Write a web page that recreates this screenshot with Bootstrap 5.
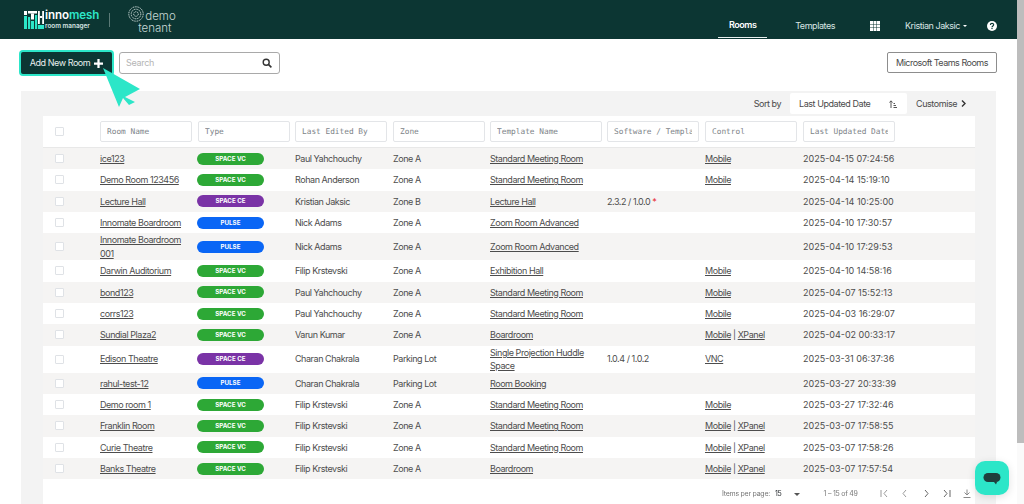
<!DOCTYPE html>
<html lang="en">

<head>
    <meta charset="UTF-8">
    <meta name="viewport" content="width=device-width, initial-scale=1.0">
    <title>Rooms - innomesh</title>
    <link href="https://cdn.jsdelivr.net/npm/bootstrap@5.3.3/dist/css/bootstrap.min.css" rel="stylesheet">
    <style>
        html, body { height: 504px; overflow: hidden; }
        body { font-family: "Inter", "Liberation Sans", sans-serif; font-size: 9px; letter-spacing: -.45px; color: #4a4a4a; background: #fff; }
        .page-wrap { height: 504px; width: 1017px; overflow: hidden; position: relative; }
        .scroll-track { position: fixed; top: 0; right: 0; width: 7px; height: 504px; background: #fafafa; }
        .scroll-thumb { width: 7px; height: 443px; background: #bdbdbd; }

        .top-bar { height: 39px; background: #0c3633; padding: 0 20px 0 24px; color: #fff; }
        .logo-mark { margin-right: 1px; }
        .logo-text { line-height: 1; color: #fff; letter-spacing: 0; }
        .logo-name { font-size: 11.6px; font-weight: 600; letter-spacing: -.1px; }
        .logo-name span { color: #2ce6c8; }
        .logo-sub { font-size: 6.4px; font-weight: 600; margin-top: 1px; color: #d5e3e1; }
        .logo-sep { width: 1px; height: 14px; background: #5b7a77; margin: 0 17px 0 10px; }
        .tenant-text { font-size: 11.5px; line-height: 12px; letter-spacing: 0; color: #c6d6d4; font-weight: 300; }
        .tenant-line { margin-left: 11px; }
        .top-right { height: 39px; }
        .top-link { font-size: 9px; color: #d9e5e3; height: 39px; padding-top: 13px; display: flex; align-items: center; text-decoration: none; }
        .top-link.on { color: #fff; font-weight: 600; width: 49px; justify-content: center; border-bottom: 1px solid #e8f0ef; height: 38px; margin-bottom: 1px; margin-right: 28px; }
        .top-icon { margin-top: 13px; flex-shrink: 0; }
        .caret-tiny { width: 0; height: 0; border-left: 2px solid transparent; border-right: 2px solid transparent; border-top: 2px solid #fff; margin-left: 3px; }

        .tool-row { padding: 13px 20px 0 21px; height: 52px; }
        .add-btn { width: 91px; height: 22px; background: #0c3633; color: #e8efee; border: 0; border-radius: 2px; font-size: 9px; letter-spacing: -.45px; box-shadow: 0 0 0 2px #2ce6c8; padding: 0; margin-right: 7px; }
        .add-btn:hover { background: #0c3633; color: #e8efee; }
        .search-box { width: 161px; height: 22px; border: 1px solid #a9a9a9; border-radius: 3px; padding: 0 7px 0 6px; }
        .search-box input { border: 0; outline: 0; width: 130px; font-size: 9px; letter-spacing: -.3px; padding: 0; background: transparent; }
        .search-box input::placeholder { color: #b5b5b5; }
        .teams-btn { height: 21px; width: 110px; border: 1px solid #8d8d8d; border-radius: 2px; font-size: 9px; letter-spacing: -.5px; background: #fff; color: #4a4a4a; padding: 0; }

        .grey-panel { background: #f3f3f3; margin: 0 0 0 21px; width: 975px; height: 420px; padding: 0 21px 0 22px; }
        .sort-row { height: 25px; padding-right: 9px; }
        .sort-select { width: 117px; height: 21px; background: #fff; border-radius: 2px; padding: 0 10px 0 9px; margin: 0 9px 0 9px; }

        .white-box { background: #fff; width: 932px; height: 395px; }
        .rooms-table { table-layout: fixed; width: 932px; margin: 0; border-collapse: separate; border-spacing: 0; }
        .rooms-table th { height: 32px; padding: 0 5px 0 0; font-weight: 400; border-bottom: 1px solid #e8e8e8; vertical-align: middle; }
        .rooms-table td { height: 21.33px; padding: 0 5px 0 0; vertical-align: middle; line-height: 13.5px; color: #4d4d4d; }
        .rooms-table tbody tr:nth-child(odd) td { background: #f5f4f3; }
        .rooms-table a { color: #4d4d4d; }
        .rooms-table .tick-col { padding-left: 12px; }
        .rooms-table .date-col { letter-spacing: 0; }
        .filter-box { width: 92px; height: 21px; border: 1px solid #e3e5e8; border-radius: 2px; padding: 0 6px; font-family: "DejaVu Sans Mono", monospace; font-size: 7.8px; letter-spacing: 0; background: #fff; outline: 0; display: block; }
        .filter-box::placeholder { color: #7d8388; }
        .filter-wide { width: 112px; }
        .tick-box { display: block; width: 9px; height: 9px; border: 1px solid #dfe2e6; border-radius: 1px; background: #fff; }
        .type-pill { display: block; width: 67px; height: 12px; line-height: 12px; margin-left: -1px; border-radius: 6px; color: #fff; text-align: center; font-size: 6.2px; font-weight: 700; letter-spacing: 0; }
        .pill-vc { background: #2da836; }
        .pill-ce { background: #7a33a6; }
        .pill-pulse { background: #0a66f5; }
        .star-red { color: #e8262c; }

        .pager-row { position: fixed; left: 722px; top: 488px; height: 12px; font-size: 7px; letter-spacing: -.25px; color: #777; white-space: nowrap; }
        .cursor-mark { position: absolute; left: 103px; top: 68px; }
        .chat-fab { position: fixed; left: 975px; top: 461px; width: 34px; height: 34px; border-radius: 10px; background: #2ce6c8; box-shadow: 0 2px 8px rgba(0, 0, 0, .12); }
    </style>
</head>

<body>
    <div class="page-wrap">
        <nav class="top-bar d-flex align-items-center">
            <svg width="20" height="18" viewBox="0 0 20 18" class="logo-mark flex-shrink-0">
                <rect x="0" y="0" width="3" height="4" fill="#fff" />
                <rect x="0" y="5" width="3" height="13" fill="#2ce6c8" />
                <rect x="4" y="0" width="9" height="2.5" fill="#fff" />
                <rect x="7" y="2.5" width="3" height="6" fill="#fff" />
                <rect x="4" y="6" width="2.2" height="12" fill="#2ce6c8" />
                <rect x="7" y="10" width="3" height="8" fill="#2ce6c8" />
                <rect x="11" y="4" width="2.2" height="14" fill="#2ce6c8" />
                <rect x="14" y="0" width="1.8" height="13" fill="#fff" />
                <rect x="15.8" y="5" width="2.4" height="2" fill="#fff" />
                <rect x="18.2" y="0" width="1.8" height="13" fill="#fff" />
                <rect x="14" y="14" width="6" height="4" fill="#2ce6c8" />
            </svg>
            <div class="logo-text">
                <div class="logo-name">inno<span>mesh</span></div>
                <div class="logo-sub">room manager</div>
            </div>
            <div class="logo-sep"></div>
            <div class="tenant-text">
                <div class="d-flex align-items-end">
                    <svg width="18" height="16" viewBox="-9 -8 18 16" class="flex-shrink-0">
                        <g fill="none" stroke="#d7e3e1" stroke-width="1" stroke-dasharray="1.1 .7">
                            <circle r="7.2" />
                            <circle r="4.8" />
                            <circle r="2.3" />
                        </g>
                    </svg>
                    <span>demo</span>
                </div>
                <div class="tenant-line">tenant</div>
            </div>
            <div class="top-right ms-auto d-flex align-items-center">
                <a href="#" class="top-link on">Rooms</a>
                <a href="#" class="top-link" style="margin-right:35px">Templates</a>
                <svg width="10" height="10" viewBox="0 0 10 10" class="top-icon" style="margin-right:25px">
                    <path fill="#fff" d="M0 0h3v3H0zM3.5 0h3v3h-3zM7 0h3v3H7zM0 3.5h3v3H0zM3.5 3.5h3v3h-3zM7 3.5h3v3H7zM0 7h3v3H0zM3.5 7h3v3h-3zM7 7h3v3H7z" />
                </svg>
                <a href="#" class="top-link">Kristian Jaksic<span class="caret-tiny"></span></a>
                <svg width="10" height="10" viewBox="0 0 10 10" class="top-icon" style="margin-left:20px">
                    <circle cx="5" cy="5" r="5" fill="#fff" />
                    <path d="M3.4 3.9c0-2 3.3-2 3.3-.1 0 1.2-1.7 1.2-1.7 2.5" fill="none" stroke="#0c3633" stroke-width="1.1" />
                    <rect x="4.4" y="6.9" width="1.2" height="1.2" fill="#0c3633" />
                </svg>
            </div>
        </nav>

        <div class="tool-row d-flex align-items-start">
            <button class="btn add-btn d-flex align-items-center justify-content-center gap-1">Add New Room
                <svg width="9" height="9" viewBox="0 0 8 8"><path d="M3 0h2v3h3v2H5v3H3V5H0V3h3z" fill="#fff" /></svg>
            </button>
            <div class="search-box d-flex align-items-center justify-content-between">
                <input type="text" placeholder="Search">
                <svg width="10" height="10" viewBox="0 0 10 10"><circle cx="4.2" cy="4.2" r="3" fill="none" stroke="#333" stroke-width="1.4" /><path d="M6.4 6.4l3 3" stroke="#333" stroke-width="1.6" /></svg>
            </div>
            <button class="teams-btn ms-auto">Microsoft Teams Rooms</button>
        </div>

        <svg class="cursor-mark" width="38" height="40" viewBox="0 0 38 40">
            <path d="M0 0L37 21 22 29 32 34 26 37 20 30 16 39z" fill="#2ce6c8" />
        </svg>

        <div class="grey-panel">
            <div class="sort-row d-flex align-items-center justify-content-end">
                <span>Sort by</span>
                <div class="sort-select d-flex align-items-center justify-content-between">
                    <span>Last Updated Date</span>
                    <svg width="8" height="8" viewBox="0 0 8 8"><path d="M2 8V1M.5 2.5L2 .8l1.5 1.7" fill="none" stroke="#555" /><path d="M4.5 3.5h1.5M4.5 5.5h2.5M4.5 7.5h3.5" stroke="#555" /></svg>
                </div>
                <span class="d-flex align-items-center gap-1">Customise
                    <svg width="5" height="7" viewBox="0 0 5 7"><path d="M1 .5l3 3-3 3" fill="none" stroke="#333" stroke-width="1.4" /></svg>
                </span>
            </div>
            <div class="white-box">
                <table class="rooms-table">
                    <colgroup>
                        <col style="width:57px"><col style="width:98px"><col style="width:97px"><col style="width:98px"><col style="width:97px"><col style="width:117px"><col style="width:98px"><col style="width:98px"><col>
                    </colgroup>
                    <thead>
                        <tr>
                            <th class="tick-col"><span class="tick-box"></span></th>
                            <th><input class="filter-box" placeholder="Room Name"></th>
                            <th><input class="filter-box" placeholder="Type"></th>
                            <th><input class="filter-box" placeholder="Last Edited By"></th>
                            <th><input class="filter-box" placeholder="Zone"></th>
                            <th><input class="filter-box filter-wide" placeholder="Template Name"></th>
                            <th><input class="filter-box" placeholder="Software / Template"></th>
                            <th><input class="filter-box" placeholder="Control"></th>
                            <th><input class="filter-box" placeholder="Last Updated Date"></th>
                        </tr>
                    </thead>
                    <tbody id="room-rows"></tbody>
                </table>
            </div>
        </div>
    </div>

    <div class="pager-row d-flex align-items-center">
        <span>Items per page:</span>
        <span class="text-dark" style="margin-left:5px">15</span>
        <span class="caret-tiny" style="border-top-color:#555;border-left-width:3px;border-right-width:3px;border-top-width:3px;margin-left:12px"></span>
        <span style="margin-left:24px">1 – 15 of 49</span>
        <svg width="94" height="10" viewBox="0 0 94 10" style="margin-left:22px">
            <g fill="none" stroke="#9a9a9a" stroke-width="1">
                <path d="M1 1v7M7 1L4 4.5 7 8" />
                <path d="M26 1l-3 3.5L26 8" />
            </g>
            <g fill="none" stroke="#666" stroke-width="1">
                <path d="M45 1l3 3.5L45 8" />
                <path d="M64 1l3 3.5L64 8M70 1v7" />
            </g>
            <path d="M87 .5v5M84.5 3.5L87 6l2.5-2.5M83.5 8.5h7" fill="none" stroke="#8a8a8a" />
        </svg>
    </div>

    <div class="chat-fab d-flex align-items-center justify-content-center">
        <svg width="18" height="14" viewBox="0 0 18 14"><rect x="0.5" y="2" width="17" height="9" rx="4.5" fill="#1f3f3c" /><path d="M11 11h3l-1 2.5z" fill="#1f3f3c" /></svg>
    </div>

    <div class="scroll-track"><div class="scroll-thumb"></div></div>

    <script>
        const rooms = [
            ["ice123", "vc", "Paul Yahchouchy", "Zone A", "Standard Meeting Room", "", "m", "2025-04-15 07:24:56"],
            ["Demo Room 123456", "vc", "Rohan Anderson", "Zone A", "Standard Meeting Room", "", "m", "2025-04-14 15:19:10"],
            ["Lecture Hall", "ce", "Kristian Jaksic", "Zone B", "Lecture Hall", "2.3.2 / 1.0.0 <span class='star-red'>*</span>", "", "2025-04-14 10:25:00"],
            ["Innomate Boardroom", "pulse", "Nick Adams", "Zone A", "Zoom Room Advanced", "", "", "2025-04-10 17:30:57"],
            ["Innomate Boardroom 001", "pulse", "Nick Adams", "Zone A", "Zoom Room Advanced", "", "", "2025-04-10 17:29:53"],
            ["Darwin Auditorium", "vc", "Filip Krstevski", "Zone A", "Exhibition Hall", "", "m", "2025-04-10 14:58:16"],
            ["bond123", "vc", "Paul Yahchouchy", "Zone A", "Standard Meeting Room", "", "m", "2025-04-07 15:52:13"],
            ["corrs123", "vc", "Paul Yahchouchy", "Zone A", "Standard Meeting Room", "", "m", "2025-04-03 16:29:07"],
            ["Sundial Plaza2", "vc", "Varun Kumar", "Zone A", "Boardroom", "", "mx", "2025-04-02 00:33:17"],
            ["Edison Theatre", "ce", "Charan Chakrala", "Parking Lot", "Single Projection Huddle Space", "1.0.4 / 1.0.2", "v", "2025-03-31 06:37:36"],
            ["rahul-test-12", "pulse", "Charan Chakrala", "Parking Lot", "Room Booking", "", "", "2025-03-27 20:33:39"],
            ["Demo room 1", "vc", "Filip Krstevski", "Zone A", "Standard Meeting Room", "", "m", "2025-03-27 17:32:46"],
            ["Franklin Room", "vc", "Filip Krstevski", "Zone A", "Standard Meeting Room", "", "mx", "2025-03-07 17:58:55"],
            ["Curie Theatre", "vc", "Filip Krstevski", "Zone A", "Standard Meeting Room", "", "mx", "2025-03-07 17:58:26"],
            ["Banks Theatre", "vc", "Filip Krstevski", "Zone A", "Boardroom", "", "mx", "2025-03-07 17:57:54"]
        ];
        const pills = { vc: ["pill-vc", "SPACE VC"], ce: ["pill-ce", "SPACE CE"], pulse: ["pill-pulse", "PULSE"] };
        const controls = {
            "": "",
            m: '<a href="#">Mobile</a>',
            mx: '<a href="#">Mobile</a> | <a href="#">XPanel</a>',
            v: '<a href="#">VNC</a>'
        };

        document.getElementById("room-rows").innerHTML = rooms.map((r) => `
            <tr>
                <td class="tick-col"><span class="tick-box"></span></td>
                <td><a href="#">${r[0]}</a></td>
                <td><span class="type-pill ${pills[r[1]][0]}">${pills[r[1]][1]}</span></td>
                <td>${r[2]}</td>
                <td>${r[3]}</td>
                <td><a href="#">${r[4]}</a></td>
                <td>${r[5]}</td>
                <td>${controls[r[6]]}</td>
                <td class="date-col">${r[7]}</td>
            </tr>`).join("");
    </script>

    <script src="https://cdn.jsdelivr.net/npm/bootstrap@5.3.3/dist/js/bootstrap.bundle.min.js"></script>
</body>

</html>
